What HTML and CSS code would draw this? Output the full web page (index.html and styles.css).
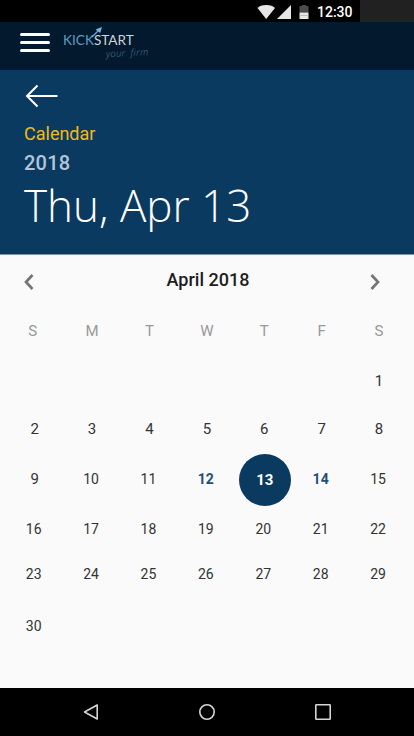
FILE: index.html
```html
<!DOCTYPE html>
<html lang="en">
<head>
<meta charset="utf-8">
<title>Calendar</title>
<link rel="stylesheet" href="styles.css">
</head>
<body>
<div class="status">
  <svg class="status-icons" width="55" height="22" viewBox="0 0 55 22">
    <path d="M.5 8Q3 5 9.200 5T18 8L9.200 19Z" fill="#e6e6e6"/>
    <path d="M20 19L34 5V19Z" fill="#e6e6e6"/>
    <path d="M42.500 6.500Q42.500 6 43 6H45V5h4v1h2q.5 0 .5.500V12.500h-9Z" fill="#4d4d4d"/>
    <path d="M42.500 12.500h9V19h-9Z" fill="#e6e6e6"/>
    <path d="M42.500 15.500h9" stroke="#aaa" stroke-width=".7"/>
  </svg>
  <span class="time">12:30</span>
  <span class="status-end"></span>
</div>
<header class="appbar">
  <div class="menu"><i></i><i></i><i></i></div>
  <div class="logo">
    <div class="brand"><span class="kick">KICK</span><span>START</span></div>
    <svg class="rocket" width="16" height="16" viewBox="0 0 16 16"><path d="M2 12L9 5" stroke="#69abd0" stroke-width="1.300"/><path d="M12 2L5.500 4.500L10.200 8Z" fill="#78b7d9"/></svg>
    <div class="tagline"><span>your</span><span>firm</span></div>
  </div>
</header>
<section class="hero">
  <svg class="back" width="34" height="24" viewBox="0 0 34 24" fill="none" stroke="#fff" stroke-width="2"><path d="M13.500 1.500L3 12L13.500 22.500M3 12H33.500"/></svg>
  <div class="label">Calendar</div>
  <div class="year">2018</div>
  <h1>Thu, Apr 13</h1>
</section>
<main>
  <div class="month">
    <svg width="12" height="18" viewBox="0 0 12 18"><path d="M9.500 2L3 9L9.500 16"/></svg>
    <h2>April 2018</h2>
    <svg width="12" height="18" viewBox="0 0 12 18"><path d="M2.500 2L9 9L2.500 16"/></svg>
  </div>
  <div class="grid">
    <b class="start">S</b><b>M</b><b>T</b><b>W</b><b>T</b><b>F</b><b>S</b>
    <span class="single first">1</span>
    <span class="single">2</span><span class="single">3</span><span class="single">4</span><span class="single">5</span><span class="single">6</span><span class="single">7</span><span class="single">8</span>
    <span class="single">9</span><span>10</span><span>11</span><span class="marked">12</span><span class="selected">13</span><span class="marked">14</span><span>15</span>
    <span>16</span><span>17</span><span>18</span><span>19</span><span>20</span><span>21</span><span>22</span>
    <span>23</span><span>24</span><span>25</span><span>26</span><span>27</span><span>28</span><span>29</span>
    <span>30</span>
  </div>
</main>
<nav>
  <svg width="18" height="18" viewBox="0 0 18 18"><path d="M15.200 2V16L2.500 9Z"/></svg>
  <svg width="18" height="18" viewBox="0 0 18 18"><circle cx="9" cy="9" r="7.200"/></svg>
  <svg width="18" height="18" viewBox="0 0 18 18"><rect x="1.800" y="1.800" width="14.400" height="14.400" rx=".5"/></svg>
</nav>
</body>
</html>
```
FILE: styles.css
```css
* { box-sizing: border-box; }
body { margin: 0; width: 414px; height: 736px; display: flex; flex-direction: column; overflow: hidden; background: #fafafa; font-family: Roboto, sans-serif; }
svg { display: block; flex: none; }
.status { height: 22px; background: #000; display: flex; justify-content: flex-end; align-items: center; }
.time { color: #fff; font-size: 14px; font-weight: 500; line-height: 22px; width: 48px; padding: 2px 0 0 5px; }
.status-end { width: 54px; height: 22px; background: #212121; }
.appbar { height: 48px; background: #03192d; display: flex; }
.menu { width: 30px; margin: 11px 0 0 20px; display: flex; flex-direction: column; gap: 5px; }
.menu i { height: 3px; border-radius: 2px; background: #fff; }
.logo { position: relative; margin: 11px 0 0 13px; width: 90px; }
.brand { font: 13.6px/15px Lato, sans-serif; color: #cdd4da; white-space: nowrap; }
.kick { color: #5c9cc0; }
.rocket { position: absolute; left: 27px; top: -8px; }
.tagline { display: flex; gap: 5px; margin-left: 43px; color: #4c7c98; font: italic 300 9.5px/10px "Open Sans", sans-serif; letter-spacing: .3px; transform: rotate(-3deg); }
.hero { height: 185px; background: #0b3a61; border-bottom: 1px solid #8095a9; padding: 14px 24px 0; }
.label { color: #f0b91c; font-size: 18px; line-height: 22px; margin-top: 15px; }
.year { color: #b2c6d9; font-size: 20px; line-height: 24px; font-weight: 500; letter-spacing: .2px; margin-top: 6px; }
h1 { margin: 0; color: #fff; font: 300 44px/60px "Open Sans", sans-serif; white-space: nowrap; }
main { height: 433px; border-top: 1px solid #f0f9ff; }
.month { height: 50px; padding: 2px 33px 0 23px; display: flex; align-items: center; justify-content: space-between; }
.month svg { fill: none; stroke: #757575; stroke-width: 2.7; }
h2 { margin: 0; color: #1d1d1d; font-size: 18px; font-weight: 500; line-height: 24px; padding: 0 0 4px 12px; }
.grid { display: grid; grid-template-columns: repeat(7, 57.4px); grid-template-rows: 50px 49px 48px 52px 47px 43px 61px; margin-left: 5px; align-items: center; justify-items: center; color: #333; font-size: 14px; }
.grid b { font-weight: 400; font-size: 15px; color: #999; padding-left: 2px; }
.grid .start { padding: 0 2px 0 0; }
.grid .single { font-size: 15px; padding-left: 2px; }
.first { grid-column: 7; }
.grid .marked { color: #234f77; font-weight: 700; }
.grid .selected { width: 52px; height: 52px; margin: 1px 0 0 3px; border-radius: 50%; background: #0b3a61; color: #fff; font-size: 15px; font-weight: 700; display: grid; place-items: center; }
nav { height: 48px; background: #000; display: flex; align-items: center; justify-content: space-between; padding: 0 82px; }
nav svg { fill: none; stroke: #d5d5d5; stroke-width: 1.6; stroke-linejoin: round; }
```
